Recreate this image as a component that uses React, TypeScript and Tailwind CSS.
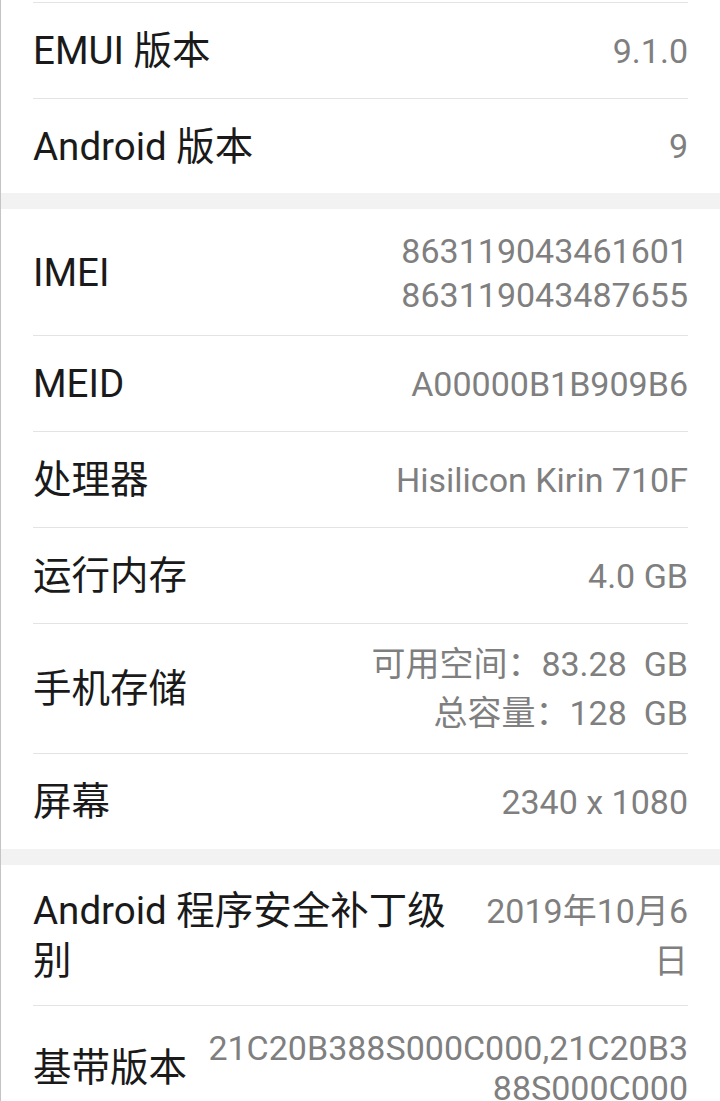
import React from 'react';

type Item = {
  label: React.ReactNode;
  value: React.ReactNode;
  rowClass: string;
  valueClass?: string;
  last?: boolean;
};

const Row = ({ label, value, rowClass, valueClass = '', last }: Item) => (
  <div
    className={
      'flex items-center justify-between gap-5 ' +
      rowClass +
      (last ? '' : ' border-b border-[#e3e3e3]')
    }
  >
    <div className="text-[38.5px] text-[#1a1a1a] whitespace-nowrap">{label}</div>
    <div className={'text-[34px] text-[#7f7f7f] text-right whitespace-pre ' + valueClass}>{value}</div>
  </div>
);

const Band = () => <div className="h-4 bg-[#f2f2f2]" />;

const App = () => {
  return (
    <div className="min-h-screen bg-[#f2f2f2] border-l border-[#c4c4c4] font-['Roboto','Noto_Sans_CJK_SC',sans-serif]">
      {/* software versions */}
      <section className="bg-white px-8">
        <div className="h-[3px] border-b border-[#e3e3e3]" />
        <Row label="EMUI 版本" value="9.1.0" rowClass="h-[96px] pt-px" />
        <Row label="Android 版本" value="9" rowClass="h-[94px] pt-px" last />
      </section>

      <Band />

      {/* hardware */}
      <section className="bg-white px-8">
        <Row
          label="IMEI"
          value={'863119043461601\n863119043487655'}
          rowClass="h-[127px] pt-[2px]"
          valueClass="leading-[44px]"
        />
        <Row label="MEID" value="A00000B1B909B6" rowClass="h-[96px] pt-px" />
        <Row label="处理器" value="Hisilicon Kirin 710F" rowClass="h-[96px] pt-px" />
        <Row label="运行内存" value="4.0 GB" rowClass="h-[96px] pt-px" />
        <Row
          label="手机存储"
          value={'可用空间：83.28  GB\n总容量：128  GB'}
          rowClass="h-[130px] pt-px"
          valueClass="leading-[49px]"
        />
        <Row label="屏幕" value="2340 x 1080" rowClass="h-[95px] pt-px" last />
      </section>

      <Band />

      {/* firmware */}
      <section className="bg-white px-8">
        <Row
          label={
            <span className="block leading-[50px]">
              Android 程序安全补丁级
              <br />
              别
            </span>
          }
          value={'2019年10月6\n日'}
          rowClass="h-[141px] pt-px"
          valueClass="leading-[50px]"
        />
        <Row
          label="基带版本"
          value={'21C20B388S000C000,21C20B3\n88S000C000'}
          rowClass="py-[22px]"
          valueClass="leading-[40px]"
          last
        />
      </section>
    </div>
  );
};

export default App;
